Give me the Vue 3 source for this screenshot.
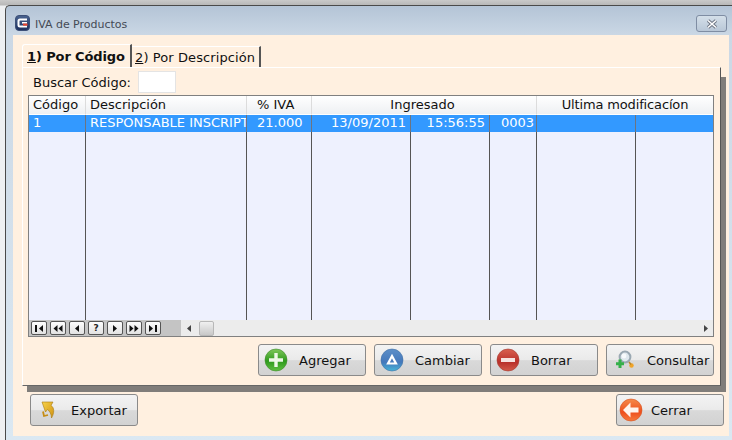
<script setup>
const cols = [
  { w: 57, cell: '1' },
  { w: 161, cell: 'RESPONSABLE INSCRIPT' },
  { w: 65, cell: '21.000', inset: true },
  { w: 99, cell: '13/09/2011', right: true },
  { w: 79, cell: '15:56:55', right: true },
  { w: 47, cell: '0003', right: true, tight: true },
  { w: 99, cell: '' },
  { w: 78, cell: '' }
]
const template = cols.map(c => c.w + 'px').join(' ')
const navs = ['first', 'prev2', 'prev', 'q', 'next', 'next2', 'last']
</script>

<template>
  <div class="screen">
    <div class="window">
      <header class="titlebar">
        <svg class="logo" width="15" height="16" viewBox="0 0 15 16">
          <defs><linearGradient id="gLogo" x1="0" y1="0" x2="0" y2="1"><stop offset="0" stop-color="#4a6490" /><stop offset="1" stop-color="#1c2f5e" /></linearGradient></defs>
          <rect x="0.5" y="0.5" width="14" height="15" rx="3.5" fill="url(#gLogo)" stroke="#3c5078" />
          <path d="M12 4.5H5Q3.5 4.5 3.5 6V10Q3.5 11.5 5 11.5H12" fill="none" stroke="#fff" stroke-width="2" />
          <rect x="7" y="7" width="5" height="1.6" fill="#fff" />
          <rect x="8" y="8.6" width="4.5" height="2" fill="#e8402a" />
        </svg>
        <span class="title">IVA de Productos</span>
        <button class="close">
          <svg width="12" height="10" viewBox="0 0 12 10">
            <path d="M2 1.5L10 8.5M10 1.5L2 8.5" stroke="#6b7280" stroke-width="3.4" />
            <path d="M2 1.5L10 8.5M10 1.5L2 8.5" stroke="#fff" stroke-width="1.6" />
          </svg>
        </button>
      </header>
      <main class="client">
        <div class="tabs">
          <div class="tab active"><span><u>1</u>) Por Código</span></div>
          <div class="tab"><span><u>2</u>) Por Descripción</span></div>
        </div>
        <div class="panel-frame">
          <section class="panel">
            <div class="search">
              <label>Buscar Código:</label>
              <input class="search-input" type="text" />
            </div>
            <div class="grid">
              <div class="grid-clip">
                <div class="table" :style="{ gridTemplateColumns: template }">
                  <div class="th">Código</div>
                  <div class="th">Descripción</div>
                  <div class="th inset">% IVA</div>
                  <div class="th center" style="grid-column: span 3">Ingresado</div>
                  <div class="th center last" style="grid-column: span 2">Ultima modificacíon</div>
                  <div v-for="(c, i) in cols" :key="'r' + i" class="td" :class="{ right: c.right, inset: c.inset, tight: c.tight }">{{ c.cell }}</div>
                  <div v-for="(c, i) in cols" :key="'e' + i" class="empty"></div>
                </div>
              </div>
              <div class="footer">
                <div class="navigator">
                  <button v-for="n in navs" :key="n" class="nav">
                    <svg v-if="n !== 'q'" width="12" height="9" viewBox="0 0 12 9">
                      <g fill="#111">
                        <template v-if="n === 'first'"><rect x="2" y="1" width="2" height="7" /><path d="M10 1V8L6 4.5Z" /></template>
                        <template v-if="n === 'prev2'"><path d="M5.5 1V8L1.5 4.5ZM10.5 1V8L6.5 4.5Z" /></template>
                        <template v-if="n === 'prev'"><path d="M8 1V8L4 4.5Z" /></template>
                        <template v-if="n === 'next'"><path d="M4 1V8L8 4.5Z" /></template>
                        <template v-if="n === 'next2'"><path d="M1.5 1V8L5.5 4.5ZM6.5 1V8L10.5 4.5Z" /></template>
                        <template v-if="n === 'last'"><path d="M2 1V8L6 4.5Z" /><rect x="8" y="1" width="2" height="7" /></template>
                      </g>
                    </svg>
                    <span v-else class="q">?</span>
                  </button>
                </div>
                <div class="hscroll">
                  <svg class="arrow" width="4" height="7" viewBox="0 0 4 7"><path d="M4 0V7L0 3.5Z" fill="#444" /></svg>
                  <div class="thumb"></div>
                  <div class="track"></div>
                  <svg class="arrow" width="4" height="7" viewBox="0 0 4 7"><path d="M0 0V7L4 3.5Z" fill="#444" /></svg>
                </div>
              </div>
            </div>
            <div class="actions">
              <button class="btn">
                <svg class="ico" width="24" height="24" viewBox="0 0 24 24">
                  <defs><linearGradient id="gGreen" x1="0" y1="0" x2="0" y2="1"><stop offset="0" stop-color="#7fc85a" /><stop offset="0.55" stop-color="#2f9a1e" /><stop offset="1" stop-color="#5fc040" /></linearGradient></defs>
                  <circle cx="12" cy="12" r="11" fill="url(#gGreen)" stroke="#3d8a2a" stroke-width="0.6" />
                  <path d="M12 5V19M5 12H19" stroke="#eef8e8" stroke-width="3.4" />
                </svg>
                <span>Agregar</span>
              </button>
              <button class="btn">
                <svg class="ico" width="24" height="24" viewBox="0 0 24 24">
                  <defs><linearGradient id="gBlue" x1="0" y1="0" x2="0" y2="1"><stop offset="0" stop-color="#5d8fc8" /><stop offset="0.6" stop-color="#4478bb" /><stop offset="1" stop-color="#45b4d8" /></linearGradient></defs>
                  <circle cx="12" cy="12" r="11" fill="url(#gBlue)" stroke="#3f6ea5" stroke-width="0.6" />
                  <path d="M12 8L16 15.5H8Z" fill="none" stroke="#fff" stroke-width="2.2" />
                </svg>
                <span>Cambiar</span>
              </button>
              <button class="btn">
                <svg class="ico" width="24" height="24" viewBox="0 0 24 24">
                  <defs><linearGradient id="gRed" x1="0" y1="0" x2="0" y2="1"><stop offset="0" stop-color="#d9604f" /><stop offset="0.6" stop-color="#b8302a" /><stop offset="1" stop-color="#d45a48" /></linearGradient></defs>
                  <circle cx="12" cy="12" r="11" fill="url(#gRed)" stroke="#a53a30" stroke-width="0.6" />
                  <rect x="5" y="10" width="14" height="4" fill="#f6e4e0" />
                </svg>
                <span>Borrar</span>
              </button>
              <button class="btn">
                <svg class="ico" width="24" height="24" viewBox="0 0 24 24">
                  <circle cx="13" cy="9" r="5.4" fill="#dfe8ee" stroke="#9aa8b2" stroke-width="2" />
                  <circle cx="12" cy="8" r="2.4" fill="#f7fafc" />
                  <circle cx="19.5" cy="17.5" r="2.2" fill="#f0a428" />
                  <path d="M17 14L19 16.5" stroke="#b8862a" stroke-width="1.6" />
                  <path d="M8 11.5V20M4 15.8H12" stroke="#35b04a" stroke-width="3" />
                </svg>
                <span>Consultar</span>
              </button>
            </div>
          </section>
        </div>
        <div class="bottom">
          <button class="btn">
            <svg class="ico" width="24" height="24" viewBox="0 0 24 24">
              <defs><linearGradient id="gGold" x1="0" y1="0" x2="1" y2="1"><stop offset="0" stop-color="#f7d24a" /><stop offset="1" stop-color="#d09212" /></linearGradient></defs>
              <path d="M6 4H17L15 7.5C18.5 9.5 18.5 15 15.5 20C15.5 16 13.5 13 11.5 11.5L9.5 14Z" fill="url(#gGold)" stroke="#a8780f" stroke-width="0.6" />
              <path d="M7 13.5L8 18L12 17" fill="none" stroke="#c58c14" stroke-width="1.8" />
            </svg>
            <span>Exportar</span>
          </button>
          <button class="btn close-btn">
            <svg class="ico" width="24" height="24" viewBox="0 0 24 24">
              <defs><linearGradient id="gOrange" x1="0" y1="0" x2="0" y2="1"><stop offset="0" stop-color="#f58a4a" /><stop offset="0.6" stop-color="#ee4f1c" /><stop offset="1" stop-color="#f67a3c" /></linearGradient></defs>
              <circle cx="12" cy="12" r="11" fill="url(#gOrange)" stroke="#d6501f" stroke-width="0.6" />
              <path d="M4 12L11.5 4.5V9.5H19.5V14.5H11.5V19.5Z" fill="#fff4ec" />
            </svg>
            <span>Cerrar</span>
          </button>
        </div>
      </main>
    </div>
  </div>
</template>

<style>
html, body { margin: 0; padding: 0; overflow: hidden; }
</style>

<style scoped>
.screen {
  width: 732px;
  height: 440px;
  padding-top: 5px;
  padding-left: 5px;
  box-sizing: border-box;
  background: linear-gradient(#c9c9c9, #b8b8b8 5px, #eef0f2 6px);
  font-family: "DejaVu Sans", sans-serif;
  font-size: 13px;
  color: #111;
  overflow: hidden;
}
.window {
  height: 435px;
  border-top: 1px solid #4a4a4a;
  border-left: 1px solid #4a4a4a;
  border-top-left-radius: 5px;
  background: linear-gradient(180deg, #b4c4d6 0, #cbd8e5 30px, #dbe8f2 100%);
  padding: 0 3px 0 7px;
  box-sizing: border-box;
  display: flex;
  flex-direction: column;
}
.titlebar {
  height: 29px;
  display: flex;
  align-items: center;
  flex: none;
}
.logo { margin-left: 2px; margin-top: 5px; }
.title {
  margin-left: 5px;
  margin-top: 7px;
  font-size: 11px;
  letter-spacing: -0.03px;
  color: #444a55;
}
.close {
  margin-left: auto;
  margin-top: 6px;
  margin-right: 2px;
  width: 31px;
  height: 17px;
  padding: 0;
  border: 1px solid #7f8da3;
  border-radius: 3px;
  background: linear-gradient(#d4dfe9, #b9c7d7);
  display: flex;
  align-items: center;
  justify-content: center;
}
.client {
  height: 401px;
  background: #fff0e0;
  padding: 9px 0 0 9px;
  box-sizing: border-box;
  display: flex;
  flex-direction: column;
  flex: none;
}
.tabs { display: flex; align-items: flex-end; height: 23px; flex: none; }
.tab {
  height: 21px;
  width: 129px;
  box-sizing: border-box;
  border-top: 1px solid #fff;
  border-right: 2px solid #555;
  display: flex;
  align-items: center;
  padding-left: 3px;
  letter-spacing: 0.1px;
  white-space: nowrap;
}
.tab.active {
  height: 23px;
  width: 110px;
  font-weight: bold;
  letter-spacing: -0.12px;
  border-left: 1px solid #fff;
  padding-left: 4px;
  border-top-left-radius: 3px;
}
.panel-frame {
  width: 704px;
  height: 325px;
  flex: none;
  margin-bottom: 2px;
  background:
    linear-gradient(#807d7a, #807d7a) right bottom / 5px 315px no-repeat,
    linear-gradient(#807d7a, #807d7a) right bottom / 699px 6px no-repeat;
}
.panel {
  width: 699px;
  height: 319px;
  box-sizing: border-box;
  background: #fff0e0;
  border-top: 1px solid #fff;
  border-left: 1px solid #fff;
  border-bottom: 1px solid #666;
  border-right: 1px solid #555;
  padding: 2px 0 0 5px;
  display: flex;
  flex-direction: column;
}
.search {
  display: flex;
  align-items: center;
  height: 24px;
  flex: none;
  padding-left: 5px;
}
.search-input {
  width: 38px;
  height: 22px;
  box-sizing: border-box;
  margin: 0 0 0 7px;
  background: #fff;
  border: 1px solid #e4e4e4;
  padding: 0;
}
.grid {
  margin-top: 1px;
  width: 686px;
  height: 242px;
  box-sizing: border-box;
  border: 1px solid #808080;
  background: #eef1fe;
  display: flex;
  flex-direction: column;
  flex: none;
}
.grid-clip { flex: 1; overflow: hidden; min-height: 0; }
.table {
  display: grid;
  grid-template-rows: 19px 17px 190px;
  height: 226px;
}
.th {
  background: linear-gradient(#ffffff, #eef0f3);
  border-right: 1px solid #dcdcdc;
  border-bottom: 1px solid #fff;
  box-sizing: border-box;
  padding-left: 4px;
  line-height: 18px;
  white-space: nowrap;
  overflow: hidden;
}
.th.center { text-align: center; padding-left: 0; }
.th.last { letter-spacing: -0.15px; }
.th.inset, .td.inset { padding-left: 10px; }
.th.center:nth-child(4) { padding-right: 3px; }
.td {
  background: #3399ff;
  color: #fff;
  border-right: 1px solid #6d7480;
  box-sizing: border-box;
  padding: 0 0 0 4px;
  line-height: 16px;
  white-space: nowrap;
  overflow: hidden;
}
.td.right { text-align: right; padding-right: 4px; }
.td.right.tight { padding-right: 2px; }
.empty {
  background: #eef1fe;
  border-right: 1px solid #555;
  box-sizing: border-box;
}
.footer { display: flex; height: 16px; flex: none; }
.navigator {
  width: 152px;
  background: #c4c4c4;
  display: flex;
  gap: 3px;
  padding: 1px 0 0 2px;
  box-sizing: border-box;
  flex: none;
}
.nav {
  width: 16px;
  height: 14px;
  padding: 0;
  border: 1px solid #555;
  border-radius: 2px;
  background: linear-gradient(#fdfdfd, #e2e2e2);
  display: flex;
  align-items: center;
  justify-content: center;
  box-sizing: border-box;
}
.q { font: bold 9px "DejaVu Sans", sans-serif; color: #222; }
.hscroll {
  flex: 1;
  background: #ececec;
  display: flex;
  align-items: center;
  padding: 0 5px 0 6px;
  box-sizing: border-box;
}
.thumb {
  width: 15px;
  height: 15px;
  margin-left: 8px;
  box-sizing: border-box;
  border: 1px solid #b8b8b8;
  border-radius: 2px;
  background: linear-gradient(#f0f0f0, #c8c8c8);
  flex: none;
}
.track { flex: 1; }
.arrow { flex: none; }
.actions {
  display: flex;
  gap: 8px;
  margin-top: 7px;
  padding-left: 230px;
  flex: none;
}
.bottom {
  display: flex;
  justify-content: space-between;
  padding: 0 5px 0 8px;
  flex: none;
}
.btn {
  width: 108px;
  height: 32px;
  box-sizing: border-box;
  border: 1px solid #8a8a8a;
  border-radius: 3px;
  background: linear-gradient(#f3f3f3 0, #eaeaea 50%, #d9d9d9 52%, #d2d2d2 100%);
  padding: 0 0 0 5px;
  display: flex;
  align-items: center;
  font: 13px "DejaVu Sans", sans-serif;
  color: #111;
}
.btn span { margin-left: 11px; }
.close-btn { padding-left: 2px; }
.close-btn span { margin-left: 8px; }
.ico { flex: none; }
</style>
